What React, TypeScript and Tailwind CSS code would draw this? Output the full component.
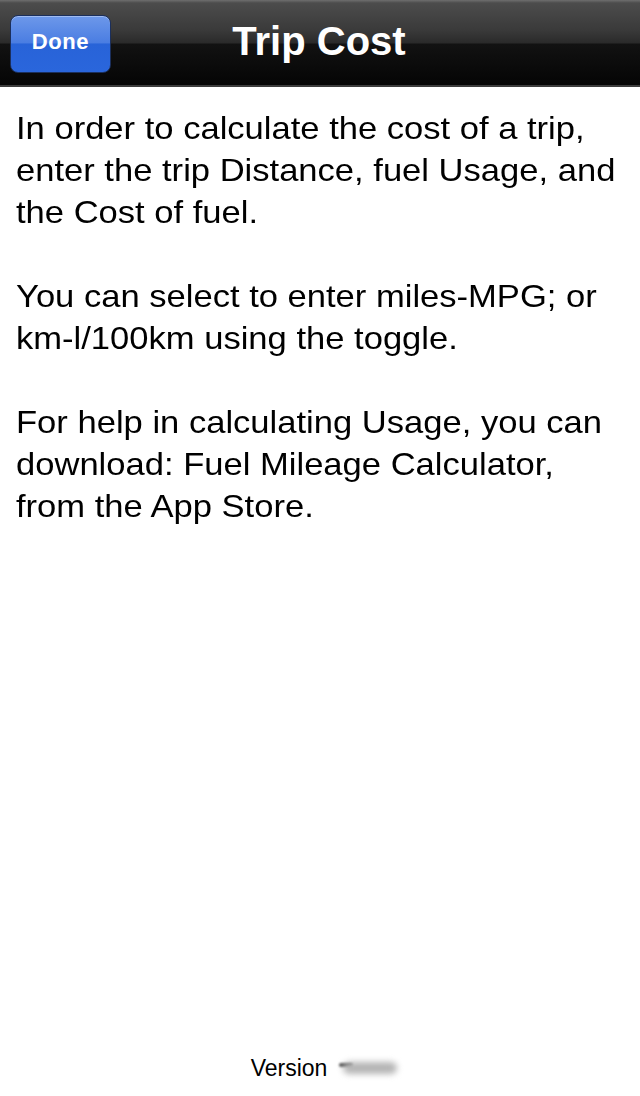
export default function App() {
  const font = { fontFamily: '"Liberation Sans", Arial, sans-serif' }

  return (
    <div className="flex h-[1096px] w-[640px] flex-col overflow-hidden bg-white" style={font}>
      <header className="relative flex h-[87px] items-center justify-center border-b-2 border-[#3c3c3c] bg-[linear-gradient(to_bottom,#6e6e6e_0px,#4c4c4c_3px,#3a3a3a_30px,#2a2a2a_43px,#121212_44px,#050505_84px)]">
        <button className="absolute top-[15px] left-[10px] flex h-[58px] w-[101px] items-center justify-center rounded-[8px] border border-[#1b2f5c] bg-[linear-gradient(to_bottom,#6d98ea_0%,#4a7de2_48%,#2863d8_50%,#2a66dc_100%)] pb-[5px] text-[22px] font-bold tracking-[0.6px] text-white shadow-[inset_0_1px_0_rgba(255,255,255,0.35)]">
          Done
        </button>
        <h1 className="mb-[3px] ml-[-2px] text-[40px] font-bold text-white">Trip Cost</h1>
      </header>

      <main className="flex-1 px-4 pt-[20px] text-[32px] leading-[42px] text-black">
        <div className="origin-left scale-x-[1.08]">
          <p>
            In order to calculate the cost of a trip,
            <br />
            enter the trip Distance, fuel Usage, and
            <br />
            the Cost of fuel.
          </p>
          <p className="mt-[42px]">
            You can select to enter miles-MPG; or
            <br />
            km-l/100km using the toggle.
          </p>
          <p className="mt-[42px]">
            For help in calculating Usage, you can
            <br />
            download: Fuel Mileage Calculator,
            <br />
            from the App Store.
          </p>
        </div>
      </main>

      <footer className="flex items-center justify-center pb-[11px] pl-[12px] text-[23px] text-black">
        <span>Version</span>
        <span className="relative ml-[12px] h-[16px] w-[62px]">
          <span className="absolute top-[3px] left-0 h-[4px] w-[14px] rounded-full bg-[#555] blur-[1px]" />
          <span className="absolute inset-x-[4px] top-[2px] h-[12px] rounded-full bg-[#b4b4b4] blur-[3px]" />
        </span>
      </footer>
    </div>
  )
}
